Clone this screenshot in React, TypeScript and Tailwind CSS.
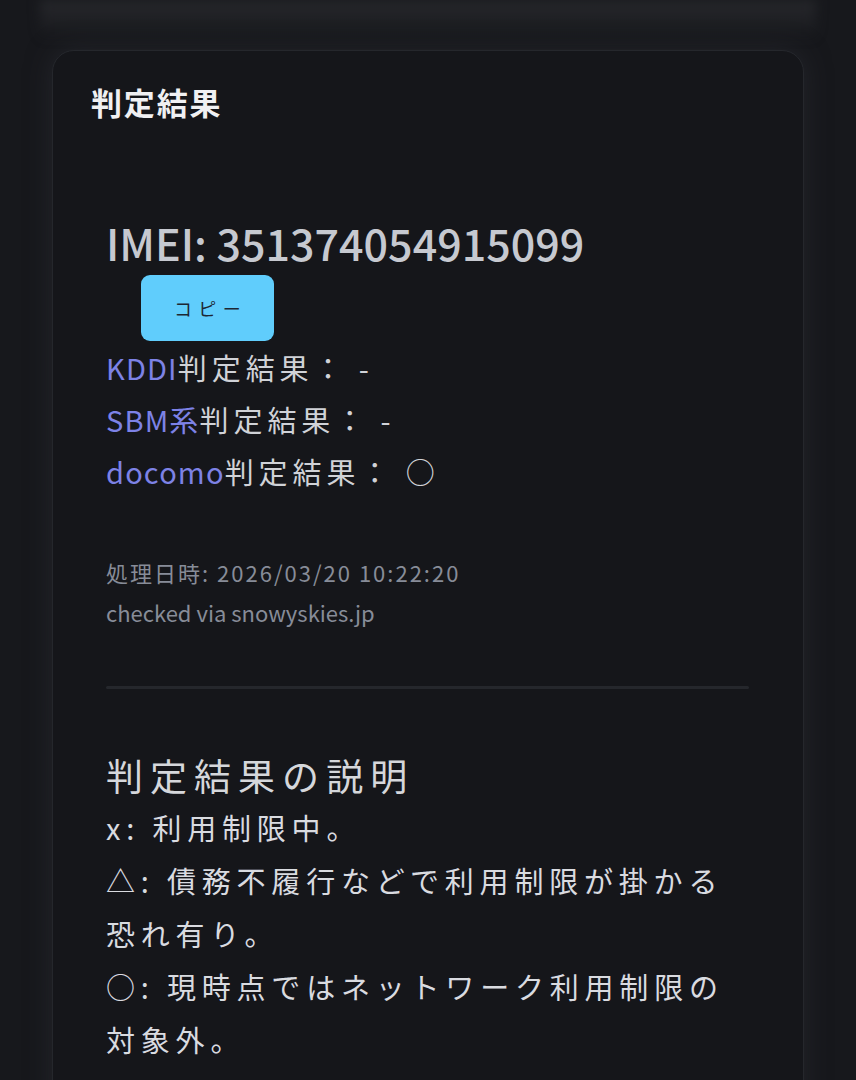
const carriers = [
  { name: 'KDDI', result: '-' },
  { name: 'SBM系', result: '-' },
  { name: 'docomo', result: '○' },
]

const notes = [
  'x: 利用制限中。',
  '△: 債務不履行などで利用制限が掛かる恐れ有り。',
  '○: 現時点ではネットワーク利用制限の対象外。',
]

const App = () => {
  return (
    <div className="h-[1080px] overflow-hidden bg-[#17181c] font-['Noto_Sans_CJK_JP','Noto_Sans',sans-serif]">
      {/* glow left by the card above */}
      <div className="mx-[40px] h-[40px] bg-gradient-to-b from-[#27282c] to-transparent blur-[6px]"></div>

      <div className="mx-[52px] mt-[10px] rounded-[22px] border border-[#25272c] bg-[#15161a] px-[38px] pb-[200px] pt-[30px] shadow-[0_0_26px_rgba(45,47,54,0.6)]">
        <h2 className="text-[31px] font-bold leading-[42px] tracking-[0.06em] text-[#f0f0f2]">判定結果</h2>

        <div className="ml-[15px] mt-[95px]">
          <div className="text-[43px] font-medium leading-[48px] text-[#c6c9d0]">IMEI: 351374054915099</div>
          <button className="ml-[35px] mt-[9px] flex h-[66px] w-[133px] items-center justify-center rounded-[9px] bg-[#60cdfc] pl-[6px] text-[18px] tracking-[0.35em] text-[#1d2733]">
            コピー
          </button>

          <div className="text-[29px] leading-[52px] tracking-[0.17em] text-[#d0d2d7]">
            {carriers.map((c) => (
              <div key={c.name}>
                <span className="tracking-[0.04em] text-[#7d82e6]">{c.name}</span>
                判定結果：&nbsp;{c.result}
              </div>
            ))}
          </div>

          <div className="mt-[55px] text-[22px] leading-[40px] text-[#878c98]">
            <p className="tracking-[2px]">処理日時: 2026/03/20 10:22:20</p>
            <p>checked via snowyskies.jp</p>
          </div>

          <div className="mt-[54px] h-[3px] w-[643px] rounded-full bg-[#25272c]"></div>

          <h3 className="mt-[60px] text-[37px] leading-[52px] tracking-[0.19em] text-[#d5d7db]">判定結果の説明</h3>
          <div className="w-[643px] text-[29px] leading-[53px] tracking-[0.2em] text-[#d9dbe0]">
            {notes.map((n) => (
              <p key={n}>{n}</p>
            ))}
          </div>
        </div>
      </div>
    </div>
  )
}

export default App
